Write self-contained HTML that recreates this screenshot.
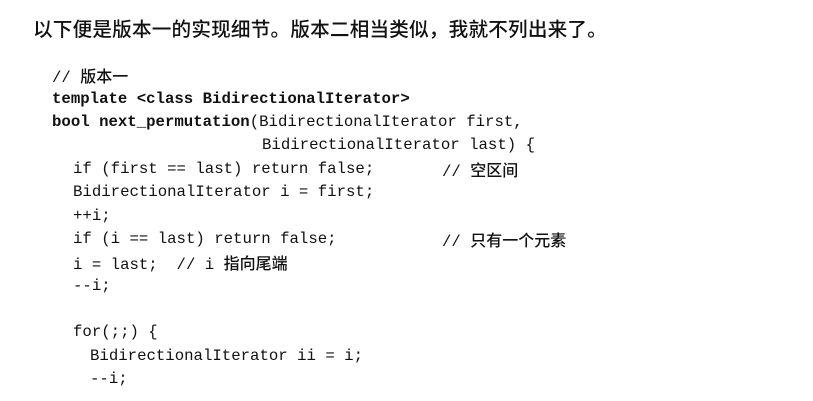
<!DOCTYPE html>
<html><head><meta charset="utf-8"><style>
html,body{margin:0;padding:0;background:#fff;}
body{width:813px;height:401px;position:relative;overflow:hidden;color:#111;}
.h{position:absolute;left:33px;top:16px;font:500 19.6px/24px "Noto Sans CJK SC",sans-serif;white-space:nowrap;letter-spacing:0.2px;}
.l{position:absolute;font:15.7px/23px "Liberation Mono",monospace;white-space:pre;}
.z{font-family:"Noto Sans CJK SC",sans-serif;font-weight:500;font-size:16px;}
b{font-weight:bold;}
</style></head><body>
<div class="h">以下便是版本一的实现细节。版本二相当类似，我就不列出来了。</div>
<div class="l" style="left:52px;top:64px">// <span class="z">版本一</span></div>
<div class="l" style="left:52px;top:88px"><b>template &lt;class BidirectionalIterator&gt;</b></div>
<div class="l" style="left:52px;top:111px"><b>bool next_permutation</b>(BidirectionalIterator first,</div>
<div class="l" style="left:262px;top:134px">BidirectionalIterator last) {</div>
<div class="l" style="left:73px;top:158px">if (first == last) return false;</div>
<div class="l" style="left:442px;top:158px">// <span class="z">空区间</span></div>
<div class="l" style="left:73px;top:181px">BidirectionalIterator i = first;</div>
<div class="l" style="left:73px;top:205px">++i;</div>
<div class="l" style="left:73px;top:228px">if (i == last) return false;</div>
<div class="l" style="left:442px;top:228px">// <span class="z">只有一个元素</span></div>
<div class="l" style="left:73px;top:251px">i = last;  // i <span class="z">指向尾端</span></div>
<div class="l" style="left:73px;top:275px">--i;</div>
<div class="l" style="left:73px;top:321px">for(;;) {</div>
<div class="l" style="left:90px;top:345px">BidirectionalIterator ii = i;</div>
<div class="l" style="left:90px;top:368px">--i;</div>
</body></html>
